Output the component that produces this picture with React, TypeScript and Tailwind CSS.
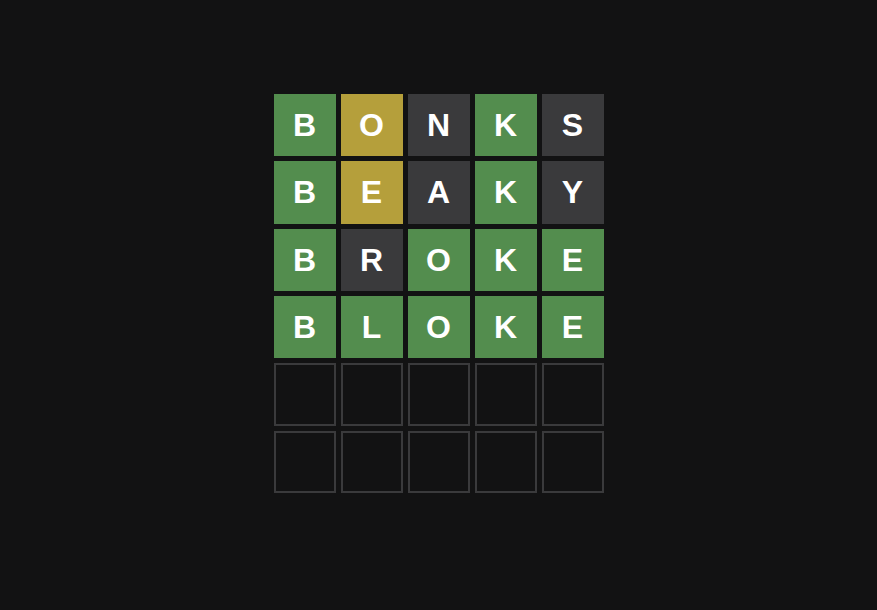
const rows: { letter: string; state: "correct" | "present" | "absent" }[][] = [
  [
    { letter: "B", state: "correct" },
    { letter: "O", state: "present" },
    { letter: "N", state: "absent" },
    { letter: "K", state: "correct" },
    { letter: "S", state: "absent" },
  ],
  [
    { letter: "B", state: "correct" },
    { letter: "E", state: "present" },
    { letter: "A", state: "absent" },
    { letter: "K", state: "correct" },
    { letter: "Y", state: "absent" },
  ],
  [
    { letter: "B", state: "correct" },
    { letter: "R", state: "absent" },
    { letter: "O", state: "correct" },
    { letter: "K", state: "correct" },
    { letter: "E", state: "correct" },
  ],
  [
    { letter: "B", state: "correct" },
    { letter: "L", state: "correct" },
    { letter: "O", state: "correct" },
    { letter: "K", state: "correct" },
    { letter: "E", state: "correct" },
  ],
];

const stateClass = {
  correct: "bg-[#538d4e] border-[#538d4e]",
  present: "bg-[#b59f3b] border-[#b59f3b]",
  absent: "bg-[#3a3a3c] border-[#3a3a3c]",
};

const Tile = ({ letter, state }: { letter?: string; state?: keyof typeof stateClass }) => (
  <div
    className={`flex w-[62px] items-center justify-center border-2 text-[32px] font-bold leading-none text-white ${
      state ? stateClass[state] : "border-[#3a3a3c] bg-transparent"
    }`}
  >
    {letter}
  </div>
);

export default function App() {
  return (
    <div
      className="flex h-[610px] w-full justify-center bg-[#121213] pt-[94px]"
      style={{ fontFamily: '"Liberation Sans", Arial, sans-serif' }}
    >
      <div className="grid h-[399px] grid-cols-5 grid-rows-6 gap-[5px]">
        {rows.map((row, r) =>
          row.map((t, c) => <Tile key={`${r}-${c}`} letter={t.letter} state={t.state} />)
        )}
        {Array.from({ length: 10 }).map((_, i) => (
          <Tile key={`empty-${i}`} />
        ))}
      </div>
    </div>
  );
}
